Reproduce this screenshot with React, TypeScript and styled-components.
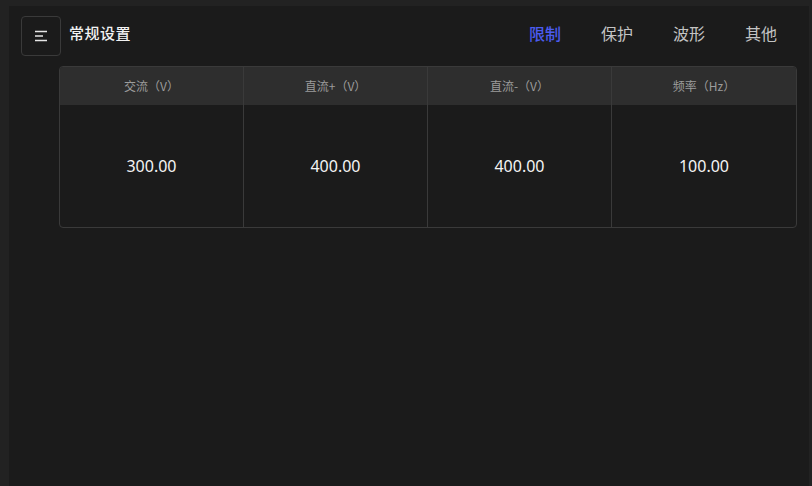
import styled, { createGlobalStyle } from 'styled-components'

const GlobalStyle = createGlobalStyle`
  html, body {
    margin: 0;
    padding: 0;
    background: #222222;
    font-family: 'Noto Sans CJK SC', 'Noto Sans', sans-serif;
  }
  #root {
    height: 486px;
  }
`

const Shell = styled.div`
  box-sizing: border-box;
  height: 486px;
  padding: 6px 3px 0 9px;
  background: #222222;
  display: flex;
`

const Panel = styled.div`
  flex: 1;
  background: #1b1b1b;
  display: flex;
  flex-flow: column nowrap;
  padding: 10px 12px 0 12px;
`

const TopBar = styled.div`
  display: flex;
  align-items: center;
  height: 40px;
`

const MenuButton = styled.button`
  box-sizing: border-box;
  width: 40px;
  height: 40px;
  padding: 0;
  border: 1px solid #3a3a3a;
  border-radius: 4px;
  background: #1b1b1b;
  display: flex;
  align-items: center;
  justify-content: center;
  cursor: pointer;
`

const Title = styled.h2`
  margin: 0 0 0 8px;
  padding-bottom: 6px;
  font-size: 15px;
  line-height: 20px;
  font-weight: 500;
  color: #f2f2f2;
  letter-spacing: 0.5px;
`

const Tabs = styled.nav`
  margin-left: auto;
  margin-right: 20px;
  padding-bottom: 6px;
  display: flex;
  gap: 40px;
`

const Tab = styled.span<{ $active?: boolean }>`
  font-size: 16px;
  line-height: 22px;
  color: ${(p) => (p.$active ? '#4b5cf0' : '#c4c4c4')};
  font-weight: ${(p) => (p.$active ? 500 : 400)};
  cursor: pointer;
`

const Table = styled.div`
  margin: 10px 0 0 38px;
  border: 1px solid #3a3a3a;
  border-radius: 4px;
  overflow: hidden;
  display: grid;
  grid-template-columns: 183px 184px 184px 1fr;
  grid-template-rows: 38px 122px;
`

const HeadCell = styled.div`
  background: #2e2e2e;
  color: #9c9c9c;
  font-size: 12px;
  display: flex;
  align-items: center;
  justify-content: center;
  padding-bottom: 2px;
  & + & {
    border-left: 1px solid #3a3a3a;
  }
`

const ValueCell = styled.div<{ $first?: boolean }>`
  color: #f4f4f4;
  font-family: 'Noto Sans', sans-serif;
  font-size: 16px;
  display: flex;
  align-items: center;
  justify-content: center;
  border-left: ${(p) => (p.$first ? 'none' : '1px solid #3a3a3a')};
`

const MenuIcon = () => (
  <svg width='14' height='14' viewBox='0 0 14 14' fill='none'>
    <path d='M1 2.5h12M1 7h8M1 11.5h12' stroke='#e6e6e6' strokeWidth='1.3' />
  </svg>
)

const columns = [
  { label: '交流（V）', value: '300.00' },
  { label: '直流+（V）', value: '400.00' },
  { label: '直流-（V）', value: '400.00' },
  { label: '频率（Hz）', value: '100.00' },
]

const tabs = ['限制', '保护', '波形', '其他']

export default function App() {
  return (
    <>
      <GlobalStyle />
      <Shell>
        <Panel>
          <TopBar>
            <MenuButton>
              <MenuIcon />
            </MenuButton>
            <Title>常规设置</Title>
            <Tabs>
              {tabs.map((t, i) => (
                <Tab key={t} $active={i === 0}>
                  {t}
                </Tab>
              ))}
            </Tabs>
          </TopBar>
          <Table>
            {columns.map((c) => (
              <HeadCell key={c.label}>{c.label}</HeadCell>
            ))}
            {columns.map((c, i) => (
              <ValueCell key={c.label} $first={i === 0}>
                {c.value}
              </ValueCell>
            ))}
          </Table>
        </Panel>
      </Shell>
    </>
  )
}
